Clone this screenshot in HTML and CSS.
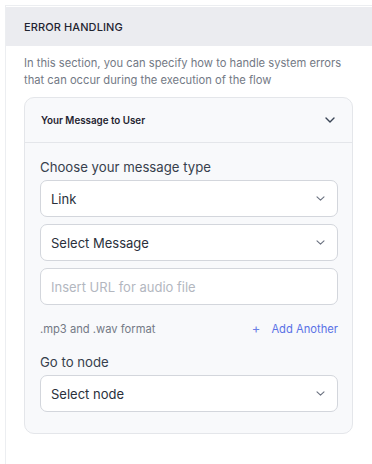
FILE: index.html
```html
<!DOCTYPE html>
<html lang="en">
<head>
    <meta charset="UTF-8">
    <meta name="viewport" content="width=device-width, initial-scale=1.0">
    <title>Error Handling</title>
    <link rel="stylesheet" href="styles.css">
</head>
<body>
    <div class="panel">
        <div class="section-header">ERROR HANDLING</div>
        <p class="description">In this section, you can specify how to handle system errors that can occur during the execution of the flow</p>

        <div class="card">
            <div class="card-header">
                <span>Your Message to User</span>
                <svg class="chevron" width="10" height="6" viewBox="0 0 10 6"><path d="M1 1l4 4 4-4" fill="none" stroke="#3b4556" stroke-width="1.4" stroke-linecap="round" stroke-linejoin="round"/></svg>
            </div>
            <div class="card-body">
                <div class="field-label">Choose your message type</div>
                <div class="select">
                    <span>Link</span>
                    <svg width="9" height="5" viewBox="0 0 9 5"><path d="M1 0.8l3.5 3.4 3.5-3.4" fill="none" stroke="#6b7280" stroke-width="1.1" stroke-linecap="round" stroke-linejoin="round"/></svg>
                </div>
                <div class="select">
                    <span>Select Message</span>
                    <svg width="9" height="5" viewBox="0 0 9 5"><path d="M1 0.8l3.5 3.4 3.5-3.4" fill="none" stroke="#6b7280" stroke-width="1.1" stroke-linecap="round" stroke-linejoin="round"/></svg>
                </div>
                <div class="select input">
                    <span class="placeholder">Insert URL for audio file</span>
                </div>
                <div class="hint-row">
                    <span class="hint">.mp3 and .wav format</span>
                    <span class="add-link"><span class="plus">+</span>Add Another</span>
                </div>
                <div class="field-label node-label">Go to node</div>
                <div class="select">
                    <span>Select node</span>
                    <svg width="9" height="5" viewBox="0 0 9 5"><path d="M1 0.8l3.5 3.4 3.5-3.4" fill="none" stroke="#6b7280" stroke-width="1.1" stroke-linecap="round" stroke-linejoin="round"/></svg>
                </div>
            </div>
        </div>
    </div>
</body>
</html>
```

FILE: styles.css
```css
* {
    margin: 0;
    padding: 0;
    box-sizing: border-box;
}

body {
    font-family: Inter, 'Noto Sans', sans-serif;
    background: white;
    color: #1f2937;
}

.panel {
    margin: 5px 0 0 5px;
    padding-top: 1px;
    border-left: 1px solid #eceef1;
    border-top: 1px solid #eceef1;
    min-height: 459px;
}

.section-header {
    height: 39px;
    display: flex;
    align-items: center;
    padding-left: 18px;
    background: #ebecf0;
    font-size: 11px;
    font-weight: 500;
    color: #1f2430;
    letter-spacing: 0.1px;
}

.description {
    padding: 9px 10px 0 18px;
    font-size: 11.2px;
    line-height: 17px;
    color: #737985;
}

.card {
    margin: 8px 19px 0 18px;
    background: #f8f9fb;
    border: 1px solid #e4e6ea;
    border-radius: 10px;
}

.card-header {
    height: 45px;
    display: flex;
    justify-content: space-between;
    align-items: center;
    padding: 0 17px 0 16px;
    border-bottom: 1px solid #e4e6ea;
    font-size: 9.8px;
    font-weight: 600;
    color: #1f2430;
}

.card-body {
    padding: 14px 14px 21px 15px;
}

.field-label {
    font-size: 13.2px;
    line-height: 20px;
    color: #373f4d;
    margin-bottom: 3px;
}

.node-label {
    margin-top: 15px;
}

.select {
    height: 37px;
    display: flex;
    justify-content: space-between;
    align-items: center;
    padding: 0 12px 0 10px;
    margin-bottom: 7px;
    background: white;
    border: 1px solid #d3d6dc;
    border-radius: 7px;
    font-size: 13px;
    color: #2a303b;
}

.select:last-child {
    margin-bottom: 0;
}

.placeholder {
    color: #b3b7bf;
}

.hint-row {
    display: flex;
    justify-content: space-between;
    align-items: center;
    margin-top: 15px;
    line-height: 16px;
}

.hint {
    font-size: 11.2px;
    color: #747a86;
}

.add-link {
    font-size: 11.2px;
    color: #5a72e6;
}

.plus {
    font-size: 13px;
    margin-right: 11px;
    color: #6a7fe6;
}
```
